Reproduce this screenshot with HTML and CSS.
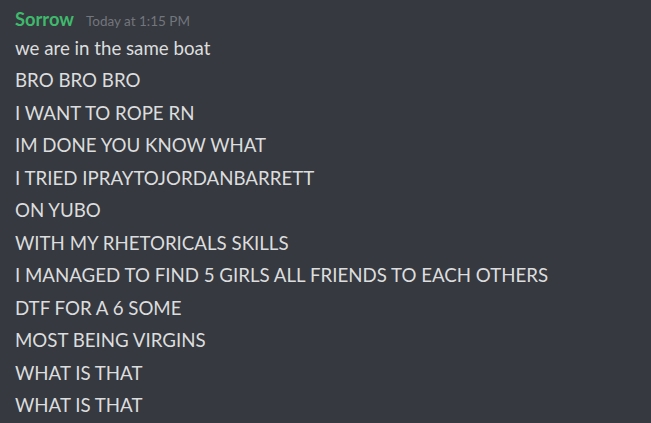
FILE: index.html
```html
<!DOCTYPE html>
<html>
<head>
<meta charset="utf-8">
<link rel="stylesheet" href="styles.css">
</head>
<body>
<div class="message">
  <div class="header">
    <span class="username">Sorrow</span>
    <span class="timestamp">Today at 1:15 PM</span>
  </div>
  <div class="lines">
    <div class="line">we are in the same boat</div>
    <div class="line">BRO BRO BRO</div>
    <div class="line">I WANT TO ROPE RN</div>
    <div class="line">IM DONE YOU KNOW WHAT</div>
    <div class="line">I TRIED IPRAYTOJORDANBARRETT</div>
    <div class="line">ON YUBO</div>
    <div class="line">WITH MY RHETORICALS SKILLS</div>
    <div class="line">I MANAGED TO FIND 5 GIRLS ALL FRIENDS TO EACH OTHERS</div>
    <div class="line">DTF FOR A 6 SOME</div>
    <div class="line">MOST BEING VIRGINS</div>
    <div class="line">WHAT IS THAT</div>
    <div class="line">WHAT IS THAT</div>
  </div>
</div>
</body>
</html>
```

FILE: styles.css
```css
html, body {
  margin: 0;
  padding: 0;
  background: #36393f;
  height: 100%;
  overflow: hidden;
}
.message {
  padding: 8px 0 0 15px;
  font-family: Lato, "Open Sans", sans-serif;
}
.header {
  display: flex;
  align-items: baseline;
  gap: 12px;
  height: 24px;
}
.username {
  color: #3fba6c;
  font-weight: 700;
  font-size: 18.3px;
}
.timestamp {
  color: #72767d;
  font-size: 13.5px;
}
.lines {
  display: flex;
  flex-direction: column;
}
.line {
  color: #dcddde;
  font-size: 18.7px;
  line-height: 32.45px;
  white-space: nowrap;
}
```
